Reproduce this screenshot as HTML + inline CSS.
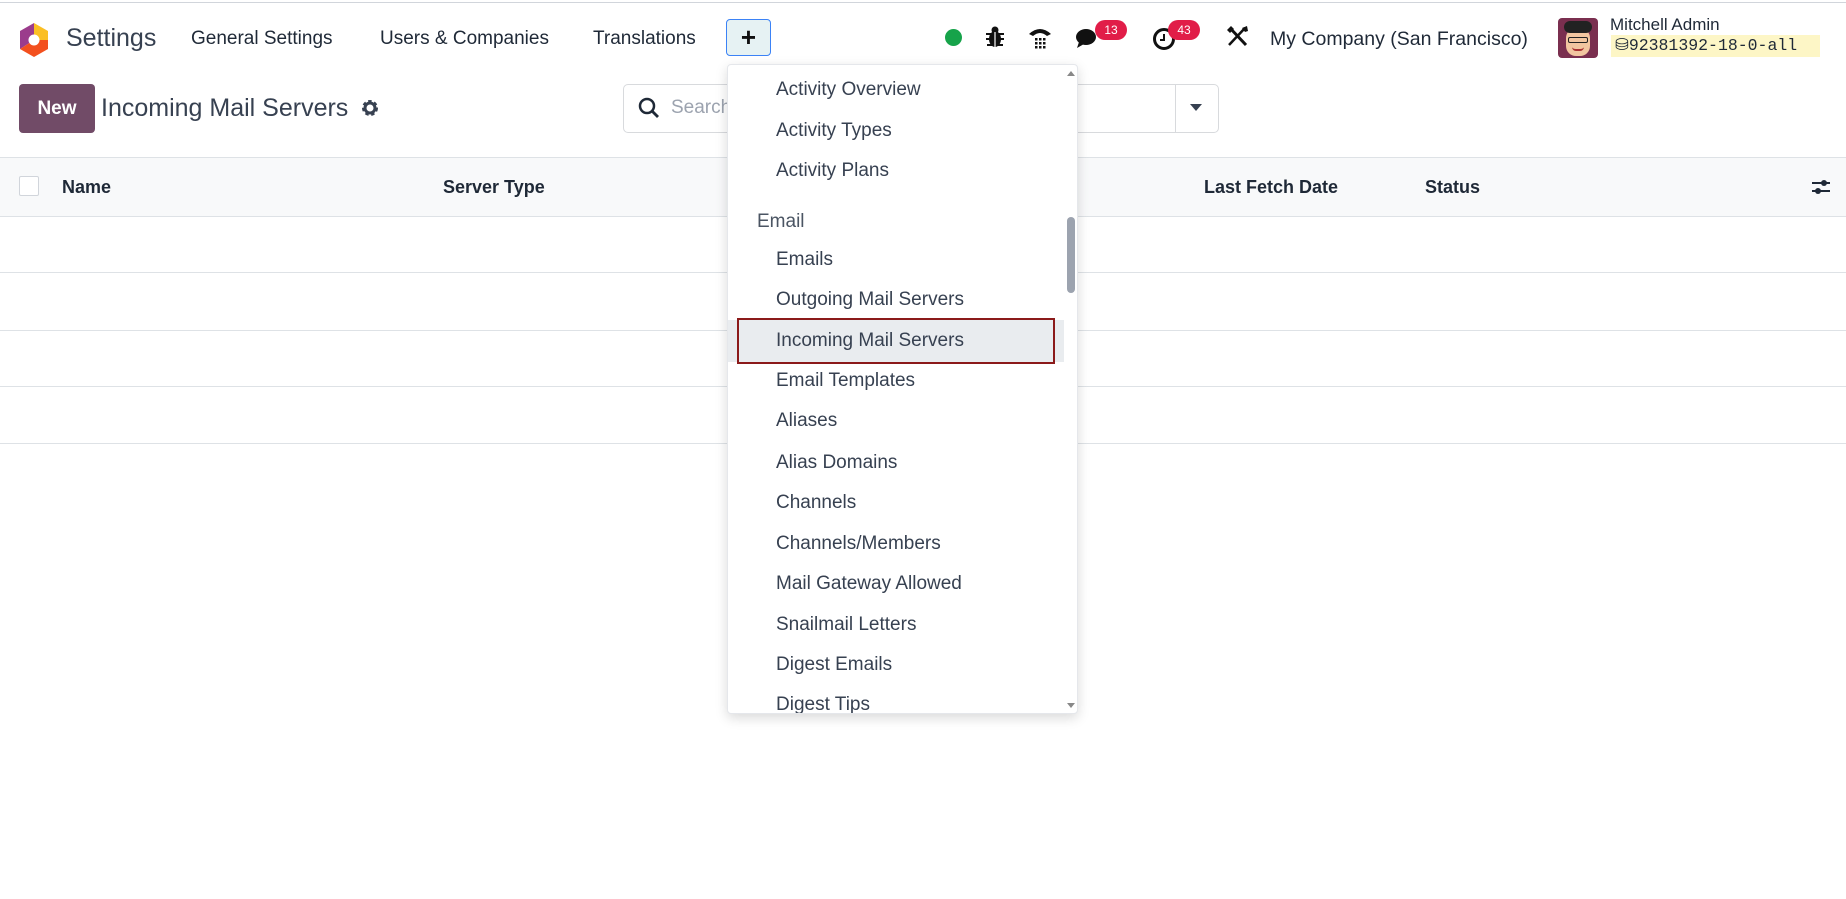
<!DOCTYPE html>
<html><head><meta charset="utf-8"><style>
*{box-sizing:border-box;margin:0;padding:0}
body{width:1846px;height:899px;background:#fff;font-family:"Liberation Sans",sans-serif;color:#1f2937;position:relative;overflow:hidden}
.a{position:absolute;white-space:nowrap}
.nav{font-size:19px;color:#1f2937}
.th{font-size:18px;font-weight:bold;color:#1f2937;top:177px}
.it{position:absolute;left:776px;font-size:19px;color:#374151;white-space:nowrap}
.line{position:absolute;left:0;width:1846px;height:1px;background:#dee2e6}
.badge{position:absolute;background:#e11d48;color:#fff;font-size:12px;border-radius:10px;height:20px;line-height:20px;text-align:center;width:32px}
</style></head><body>
<div class="line" style="top:2px;background:#d1d5db"></div>
<svg class="a" style="left:18px;top:22px" width="32" height="36" viewBox="0 0 32 36">
<polygon points="16,1 30,9 30,18 16,18" fill="#fbbf24"/>
<polygon points="16,1 2,9 2,27 16,18" fill="#9b3c8c"/>
<polygon points="2,27 16,35 30,27 30,18 16,18" fill="#f3501e"/>
<circle cx="16" cy="18" r="5.5" fill="#fff"/>
</svg>
<div class="a" style="left:66px;top:24px;font-size:25px;color:#374151">Settings</div>
<div class="a nav" style="left:191px;top:28px">General Settings</div>
<div class="a nav" style="left:380px;top:28px">Users &amp; Companies</div>
<div class="a nav" style="left:593px;top:28px">Translations</div>
<div class="a" style="left:726px;top:19px;width:45px;height:37px;border:1px solid #3b82f6;border-radius:4px;background:#e6f2f3;text-align:center;line-height:34px;font-size:26px;font-weight:bold;color:#111">+</div>
<div class="a" style="left:945px;top:29px;width:17px;height:17px;border-radius:50%;background:#16a34a"></div>
<svg class="a" style="left:985px;top:25px" width="20" height="24" viewBox="0 0 20 24"><ellipse cx="10" cy="14" rx="6" ry="8" fill="#111"/><circle cx="10" cy="5" r="3.5" fill="#111"/><path d="M1 9h18M1 14h18M2 20h16" stroke="#111" stroke-width="2"/><path d="M10 7v15" stroke="#fff" stroke-width="1.2"/></svg>
<svg class="a" style="left:1027px;top:26px" width="26" height="24" viewBox="0 0 26 24"><path d="M2 8 Q13 -2 24 8 L20 10 Q13 4 6 10Z" fill="#111"/><g fill="#111"><rect x="8" y="12" width="2.5" height="2.5"/><rect x="12" y="12" width="2.5" height="2.5"/><rect x="16" y="12" width="2.5" height="2.5"/><rect x="8" y="16" width="2.5" height="2.5"/><rect x="12" y="16" width="2.5" height="2.5"/><rect x="16" y="16" width="2.5" height="2.5"/><rect x="8" y="20" width="2.5" height="2.5"/><rect x="12" y="20" width="2.5" height="2.5"/><rect x="16" y="20" width="2.5" height="2.5"/></g></svg>
<svg class="a" style="left:1075px;top:27px" width="28" height="24" viewBox="0 0 28 24"><ellipse cx="11" cy="10" rx="10" ry="8" fill="#111"/><path d="M4 15 L2 21 L9 17Z" fill="#111"/></svg>
<div class="badge" style="left:1095px;top:20px">13</div>
<svg class="a" style="left:1152px;top:26px" width="26" height="26" viewBox="0 0 26 26"><circle cx="12" cy="13" r="9.5" fill="none" stroke="#111" stroke-width="3"/><path d="M12 8v6h-4" stroke="#111" stroke-width="2" fill="none"/></svg>
<div class="badge" style="left:1168px;top:20px">43</div>
<svg class="a" style="left:1225px;top:25px" width="24" height="24" viewBox="0 0 24 24"><path d="M5 3 L21 20" stroke="#111" stroke-width="3"/><path d="M20 3 L4 20" stroke="#111" stroke-width="2.5"/><path d="M2 5 L6 1 L9 4 L5 8Z" fill="#111"/><path d="M17 3 L22 1 L23 6 L20 7Z" fill="#111"/></svg>
<div class="a nav" style="left:1270px;top:28px;font-size:19.5px">My Company (San Francisco)</div>
<div class="a" style="left:1558px;top:18px;width:40px;height:40px;border-radius:4px;background:#7a2f4f;overflow:hidden"><div style="position:absolute;left:8px;top:10px;width:24px;height:28px;border-radius:10px;background:#f2c6a0"></div><div style="position:absolute;left:6px;top:3px;width:28px;height:12px;background:#222;border-radius:6px"></div><div style="position:absolute;left:10px;top:19px;width:20px;height:6px;border:1.5px solid #222;border-radius:2px"></div><div style="position:absolute;left:14px;top:29px;width:12px;height:4px;border-bottom:2px solid #a33;border-radius:0 0 6px 6px"></div></div>
<div class="a" style="left:1610px;top:15px;font-size:17px;color:#1f2937">Mitchell Admin</div>
<div class="a" style="left:1611px;top:35px;height:22px;width:209px;background:#fdf6c6;font-family:'Liberation Mono',monospace;font-size:16.5px;line-height:22px;padding-left:4px;color:#1f2937">&#9921;92381392-18-0-all</div>
<div class="a" style="left:19px;top:84px;width:76px;height:49px;background:#714b67;border-radius:4px;color:#fff;font-size:19px;font-weight:bold;text-align:center;line-height:49px">New</div>
<div class="a" style="left:101px;top:94px;font-size:25px;color:#374151">Incoming Mail Servers</div>
<svg class="a" style="left:360px;top:98px" width="20" height="20" viewBox="0 0 20 20"><circle cx="10" cy="10" r="6" fill="none" stroke="#374151" stroke-width="4" stroke-dasharray="3 2.3"/><circle cx="10" cy="10" r="5" fill="none" stroke="#374151" stroke-width="3"/></svg>
<div class="a" style="left:623px;top:84px;width:596px;height:49px;border:1px solid #d8dadd;border-radius:5px"></div>
<div class="a" style="left:1175px;top:84px;width:1px;height:49px;background:#d8dadd"></div>
<div class="a" style="left:1190px;top:104px;width:0;height:0;border-left:6px solid transparent;border-right:6px solid transparent;border-top:7px solid #374151"></div>
<svg class="a" style="left:637px;top:96px" width="24" height="24" viewBox="0 0 24 24"><circle cx="10" cy="10" r="7" fill="none" stroke="#1f2937" stroke-width="2.5"/><path d="M15 15l6 6" stroke="#1f2937" stroke-width="2.8"/></svg>
<div class="a" style="left:671px;top:97px;font-size:19px;color:#9ca3af">Search...</div>
<div class="a" style="left:0;top:157px;width:1846px;height:60px;background:#f8f9fa"></div>
<div class="line" style="top:157px"></div>
<div class="line" style="top:216px"></div>
<div class="line" style="top:272px"></div>
<div class="line" style="top:330px"></div>
<div class="line" style="top:386px"></div>
<div class="line" style="top:443px"></div>
<div class="a" style="left:19px;top:176px;width:20px;height:20px;border:1px solid #d1d5db;background:#fff;border-radius:2px"></div>
<div class="a th" style="left:62px">Name</div>
<div class="a th" style="left:443px">Server Type</div>
<div class="a th" style="left:1204px">Last Fetch Date</div>
<div class="a th" style="left:1425px">Status</div>
<svg class="a" style="left:1810px;top:176px" width="22" height="22" viewBox="0 0 22 22"><path d="M2 7h18M2 15h18" stroke="#1f2937" stroke-width="2"/><circle cx="14" cy="7" r="3" fill="#1f2937"/><circle cx="8" cy="15" r="3" fill="#1f2937"/></svg>
<div class="a" style="left:727px;top:64px;width:351px;height:650px;background:#fff;border:1px solid #e5e7eb;border-radius:4px;box-shadow:0 4px 12px rgba(0,0,0,.15);overflow:hidden">
<div style="position:absolute;left:0;top:255px;width:336px;height:42px;background:#e9ecef"></div>
<div style="position:absolute;left:9px;top:253px;width:318px;height:46px;border:2px solid #8b1a1a"></div>
<div style="position:absolute;left:339px;top:152px;width:8px;height:76px;border-radius:4px;background:#9ca3af"></div>
<div style="position:absolute;left:339px;top:6px;border-left:4px solid transparent;border-right:4px solid transparent;border-bottom:5px solid #888"></div>
<div style="position:absolute;left:339px;top:638px;border-left:4px solid transparent;border-right:4px solid transparent;border-top:5px solid #888"></div>
</div>
<div class="it" style="top:79px">Activity Overview</div>
<div class="it" style="top:120px">Activity Types</div>
<div class="it" style="top:160px">Activity Plans</div>
<div class="it" style="top:211px;left:757px;color:#4b5563">Email</div>
<div class="it" style="top:249px">Emails</div>
<div class="it" style="top:289px">Outgoing Mail Servers</div>
<div class="it" style="top:330px">Incoming Mail Servers</div>
<div class="it" style="top:370px">Email Templates</div>
<div class="it" style="top:410px">Aliases</div>
<div class="it" style="top:452px">Alias Domains</div>
<div class="it" style="top:492px">Channels</div>
<div class="it" style="top:533px">Channels/Members</div>
<div class="it" style="top:573px">Mail Gateway Allowed</div>
<div class="it" style="top:614px">Snailmail Letters</div>
<div class="it" style="top:654px">Digest Emails</div>
<div class="a" style="left:728px;top:694px;width:336px;height:19px;overflow:hidden"><div style="position:absolute;left:48px;top:0;font-size:19px;color:#374151">Digest Tips</div></div>
</body></html>
